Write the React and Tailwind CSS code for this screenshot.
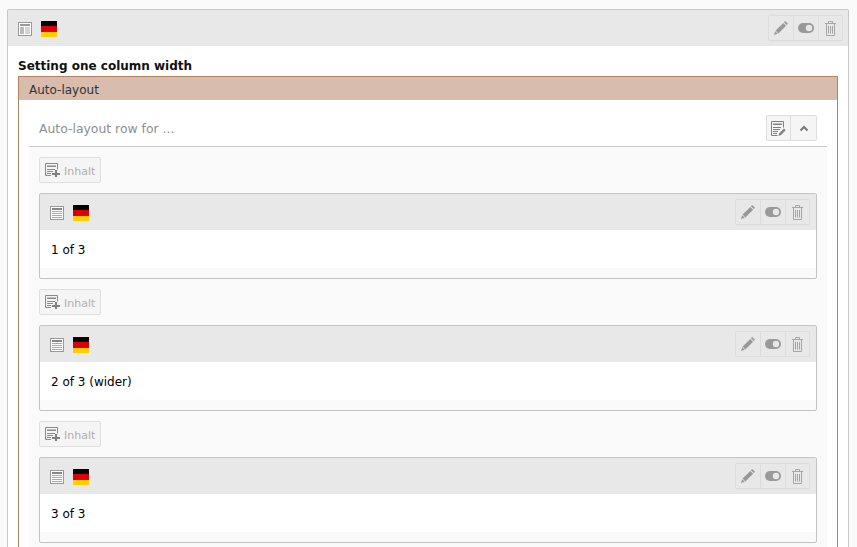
import React from "react";

const Flag = () => (
    <span className="flex h-4 w-4 flex-col">
        <span className="h-[5px] bg-black" />
        <span className="h-[6px] bg-[#dd0000]" />
        <span className="h-[5px] bg-[#ffce00]" />
    </span>
);

const ContainerIcon = () => (
    <svg width="14" height="14" viewBox="0 0 14 14">
        <rect x="0.5" y="0.5" width="13" height="13" fill="#fff" stroke="#999" />
        <rect x="2" y="2" width="10" height="2" fill="#999" />
        <rect x="2" y="5" width="4" height="7" fill="#bbb" />
        <rect x="7" y="5" width="5" height="7" fill="#d4d4d4" />
    </svg>
);

const TextIcon = () => (
    <svg width="14" height="14" viewBox="0 0 14 14">
        <rect x="0.5" y="0.5" width="13" height="13" fill="#fff" stroke="#999" />
        <rect x="2" y="2" width="10" height="2" fill="#888" />
        <path d="M2 5.5h10M2 7.5h10M2 9.5h10M2 11.5h10" stroke="#aaa" />
    </svg>
);

const PencilIcon = () => (
    <svg width="14" height="14" viewBox="0 0 14 14" fill="#999">
        <path d="M11.2 0l2.8 2.8-1.3 1.3-2.8-2.8z" />
        <path d="M9.3 1.9l2.8 2.8-7.7 7.7-2.8-2.8z" />
        <path d="M1.2 10.2l2.6 2.6-3.8 1.2z" />
    </svg>
);

const ToggleIcon = () => (
    <svg width="16" height="10" viewBox="0 0 16 10">
        <rect width="16" height="10" rx="5" fill="#999" />
        <circle cx="11" cy="5" r="3.2" fill="#e8e8e8" />
    </svg>
);

const TrashIcon = () => (
    <svg width="11" height="15" viewBox="0 0 11 15" fill="none" stroke="#a6a6a6">
        <path d="M0 2.5h11M3.5 2.5v-2h4v2M1.5 2.5v12h8v-12M3.5 5v7.5M5.5 5v7.5M7.5 5v7.5" />
    </svg>
);

const NoteEditIcon = ({ color = "#808080" }) => (
    <svg width="15" height="15" viewBox="0 0 15 15">
        <path d="M12.5 6.5V.5H.5v14h6" fill="none" stroke={color} />
        <path d="M2 2.5h9V4H2z" fill={color} />
        <path d="M2 6.5h8M2 8.5h7M2 10.5h5M2 12.5h4" stroke={color} />
        <path d="M13 7.5l1.7 1.7-5 5-2.2.6.6-2.2z" fill={color} />
    </svg>
);

const NotePlusIcon = () => (
    <svg width="15" height="14" viewBox="0 0 15 14">
        <path d="M6 12.5H.5V.5h12v6" fill="none" stroke="#8a8a8a" />
        <path d="M2 2.5h9V4H2z" fill="#8a8a8a" />
        <path d="M2 6.5h8M2 8.5h6M2 10.5h4" stroke="#8a8a8a" />
        <path d="M10 7h2v3h3v2h-3v2h-2v-2H7v-2h3z" fill="#808080" />
    </svg>
);

const ChevronUp = () => (
    <svg width="10" height="7" viewBox="0 0 10 7" fill="none" stroke="#777" strokeWidth="2">
        <path d="M1.5 5.5L5 2l3.5 3.5" />
    </svg>
);

const ActionGroup = () => (
    <div className="flex h-[26px] rounded-[2px] border border-[#dcdcdc] bg-[#e8e8e8]">
        <span className="flex w-[25px] items-center justify-center border-r border-[#dcdcdc]">
            <PencilIcon />
        </span>
        <span className="flex w-[25px] items-center justify-center border-r border-[#dcdcdc]">
            <ToggleIcon />
        </span>
        <span className="flex w-[23px] items-center justify-center">
            <TrashIcon />
        </span>
    </div>
);

const AddButton = () => (
    <div className="flex h-[26px] w-[62px] items-center gap-[4px] rounded-[2px] border border-[#dedede] bg-[#f5f5f5] pl-[5px] text-[11px] text-[#b0b0b0]">
        <NotePlusIcon />
        <span className="pt-[4px]">Inhalt</span>
    </div>
);

const ContentCard = ({ label }) => (
    <div className="ml-[10px] w-[778px] rounded-[2px] border border-[#c4c4c4] bg-[#fafafa] pb-[10px]">
        <div className="flex h-9 items-center justify-between bg-[#e8e8e8] pl-[10px] pr-[6px]">
            <div className="flex items-center gap-[9px] pt-[2px]">
                <TextIcon />
                <Flag />
            </div>
            <ActionGroup />
        </div>
        <div className="flex h-[38px] items-start bg-white pl-[11px] pt-[13px] leading-[15px] text-black">
            {label}
        </div>
    </div>
);

const items = ["1 of 3", "2 of 3 (wider)", "3 of 3"];

export default function App() {
    return (
        <div className="h-[547px] overflow-hidden bg-[#fafafa] pl-[7px] pr-[8px] pt-[9px] text-[12px] font-['DejaVu_Sans',sans-serif]">
            <div className="rounded-t-[2px] border border-[#c8c8c8] bg-white">
                <div className="flex h-9 items-center justify-between bg-[#e8e8e8] pl-[10px] pr-[5px]">
                    <div className="flex items-center gap-[9px] pt-[2px]">
                        <ContainerIcon />
                        <Flag />
                    </div>
                    <ActionGroup />
                </div>
                <div className="px-[10px] pb-4">
                    <h2 className="flex h-[30px] items-end pb-[2px] text-[12px] font-bold leading-[15px] text-[#111]">
                        Setting one column width
                    </h2>
                    <div className="border border-[#b9805f]">
                        <div className="flex h-[23px] items-center bg-[#d8bcad] pl-[10px] pt-[2px] text-[#333]">
                            Auto-layout
                        </div>
                        <div className="px-[10px] pt-[10px]">
                            <div className="flex h-[37px] items-center justify-between border-b border-[#c8c8c8] px-[10px]">
                                <span className="mt-[2px] text-[12.4px] text-[#8a8f94]">Auto-layout row for ...</span>
                                <div className="flex h-[26px] rounded-[2px] border border-[#dedede] bg-[#f5f5f5]">
                                    <span className="flex w-[24px] items-center justify-center border-r border-[#dedede]">
                                        <NoteEditIcon />
                                    </span>
                                    <span className="flex w-[25px] items-center justify-center">
                                        <ChevronUp />
                                    </span>
                                </div>
                            </div>
                            <div className="bg-[#fafafa] pt-[10px]">
                                {items.map((label) => (
                                    <div key={label} className="pb-[10px]">
                                        <div className="mb-[10px] ml-[10px]">
                                            <AddButton />
                                        </div>
                                        <ContentCard label={label} />
                                    </div>
                                ))}
                            </div>
                        </div>
                    </div>
                </div>
            </div>
        </div>
    );
}
